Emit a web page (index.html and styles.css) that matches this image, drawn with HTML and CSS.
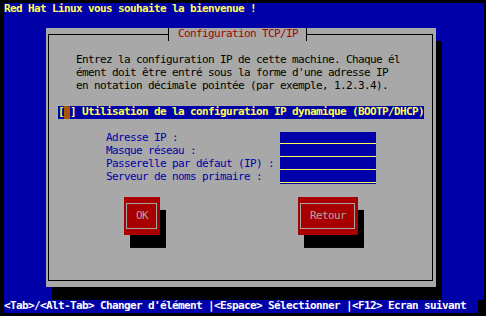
FILE: index.html
```html
<!DOCTYPE html>
<html>
<head>
  <meta charset="UTF-8">
  <meta name="viewport" content="width=device-width, initial-scale=1.0">
  <link rel="stylesheet" href="styles.css">
</head>
<body>
  <div class="screen">
    <div class="row welcome">Red Hat Linux vous souhaite la bienvenue !</div>
    <div class="row"></div>

    <div class="dialog">
      <div class="dialog-title">Configuration TCP/IP</div>

      <p class="intro">Entrez la configuration IP de cette machine. Chaque él
ément doit être entré sous la forme d'une adresse IP
en notation décimale pointée (par exemple, 1.2.3.4).</p>

      <div class="check">
        <span>[</span><span class="cursor"> </span><span>] Utilisation de la configuration IP dynamique (BOOTP/DHCP)</span>
      </div>

      <div class="fields">
        <label class="field-label">Adresse IP :</label>
        <span class="field-input"></span>
        <label class="field-label">Masque réseau :</label>
        <span class="field-input"></span>
        <label class="field-label">Passerelle par défaut (IP) :</label>
        <span class="field-input"></span>
        <label class="field-label">Serveur de noms primaire :</label>
        <span class="field-input"></span>
      </div>

      <div class="buttons">
        <button class="btn">OK</button>
        <button class="btn btn-wide">Retour</button>
      </div>
    </div>

    <div class="status">
      <span class="status-text">&lt;Tab&gt;/&lt;Alt-Tab&gt; Changer d'élément |&lt;Espace&gt; Sélectionner |&lt;F12&gt; Ecran suivant</span>
      <span class="status-end"></span>
    </div>
  </div>
</body>
</html>
```

FILE: styles.css
```css
* {
  box-sizing: border-box;
}
body {
  margin: 0;
  background: #000;
  font-family: "DejaVu Sans Mono", "Liberation Mono", monospace;
  font-size: 11px;
  letter-spacing: -0.622px;
  line-height: 12.95px;
  color: #000;
}
.screen {
  display: flex;
  flex-direction: column;
  width: 480px;
  height: 310.8px;
  margin: 2.5px 0 0 4px;
  background: #0000a8;
}
.row {
  height: 12.95px;
  white-space: pre;
}
.welcome {
  color: #fcfc54;
  font-weight: bold;
}

/* dialog window */
.dialog {
  position: relative;
  width: 390px;
  height: 259px;
  margin-left: 42px;
  padding: 25.9px 0 0 12px;
  background: #a8a8a8;
  box-shadow: 6px 12.95px 0 #000;
}
.dialog::before {
  content: '';
  position: absolute;
  top: 5.3px;
  left: 2px;
  right: 3px;
  bottom: 6.2px;
  border: 1px solid #000;
}
.dialog-title {
  position: absolute;
  top: 0;
  left: 122px;
  height: 12.95px;
  padding: 0 8px 0 9px;
  border-left: 1px solid #000;
  border-right: 1px solid #000;
  background: #a8a8a8;
  color: #a80000;
  white-space: pre;
}
.intro {
  margin: 0 0 12.95px 18px;
  white-space: pre;
}
.check {
  display: flex;
  width: fit-content;
  height: 12.95px;
  margin-bottom: 12.95px;
  background: #0000a8;
  color: #fcfc54;
  font-weight: bold;
  white-space: pre;
}
.check .cursor {
  width: 6px;
  background: #a85400;
}

/* entry fields */
.fields {
  display: grid;
  grid-template-columns: 174px 96px;
  grid-auto-rows: 12.95px;
  margin: 0 0 12.95px 48px;
}
.field-label {
  color: #0000a8;
  white-space: pre;
}
.field-input {
  background: #0000a8;
  box-shadow: inset 0 -1px #0000a8, inset 0 -2px #fcfc54;
}

/* buttons */
.buttons {
  display: flex;
  gap: 138px;
  margin-left: 66px;
}
.btn {
  position: relative;
  width: 36px;
  height: 38.85px;
  padding: 0;
  border: none;
  background: #a80000;
  color: #a8a8a8;
  font: inherit;
  letter-spacing: inherit;
  line-height: 38.85px;
  text-align: center;
  box-shadow: 6px 12.95px 0 #000;
}
.btn::before {
  content: '';
  position: absolute;
  top: 6.5px;
  left: 2px;
  right: 3px;
  bottom: 6px;
  border: 1px solid #a8a8a8;
}
.btn-wide {
  width: 60px;
}

/* help line */
.status {
  display: flex;
  height: 12.95px;
  margin-top: auto;
}
.status-text {
  width: 474px;
  color: #fcfcfc;
  font-weight: bold;
  white-space: pre;
}
.status-end {
  width: 6px;
  background: #000;
}
```
